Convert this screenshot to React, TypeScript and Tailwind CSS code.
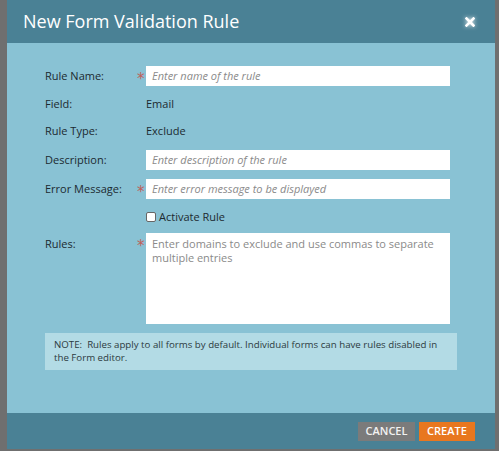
import React from "react";

const Star = () => (
  <span className="w-[9px] text-[#c0605a] text-[15px] leading-none pt-[6px] self-start" style={{ fontFamily: "'DejaVu Sans', sans-serif" }}>
    *
  </span>
);

export default function App() {
  return (
    <div
      className="w-[499px] h-[451px] bg-[#6f6f6f] pl-[7px] pr-[4px] pb-[2px] overflow-hidden"
      style={{ fontFamily: "'Open Sans', 'Noto Sans', sans-serif" }}
    >
      <div className="flex flex-col h-[449px] w-[488px]">
        <div className="h-[43px] bg-[#4a8195] flex items-center justify-between pl-[16px] pr-[20px] shrink-0">
          <span className="text-white text-[18px] leading-none pb-[1px]">New Form Validation Rule</span>
          <svg width="10" height="10" viewBox="0 0 10 10" style={{ filter: "drop-shadow(0 0 2px rgba(255,255,255,0.9))" }}>
            <path d="M1.5 1.5 L8.5 8.5 M8.5 1.5 L1.5 8.5" stroke="#fff" strokeWidth="2.6" strokeLinecap="square" />
          </svg>
        </div>
        <div className="flex-1 bg-[#89c2d4] pl-[38px] pr-[38px] pt-[23px] text-[11px] text-[#1c2a30]">
          <div className="flex items-center h-[20px]">
            <span className="w-[92px]">Rule Name:</span>
            <Star />
            <div className="w-[304px] h-[20px] bg-white flex items-center pl-[6px] italic text-[#8a8a8a]">Enter name of the rule</div>
          </div>
          <div className="flex items-center h-[20px] mt-[8px]">
            <span className="w-[101px]">Field:</span>
            <span>Email</span>
          </div>
          <div className="flex items-center h-[20px] mt-[7px]">
            <span className="w-[101px]">Rule Type:</span>
            <span>Exclude</span>
          </div>
          <div className="flex items-center h-[20px] mt-[9px]">
            <span className="w-[101px]">Description:</span>
            <div className="w-[304px] h-[20px] bg-white flex items-center pl-[6px] italic text-[#8a8a8a]">Enter description of the rule</div>
          </div>
          <div className="flex items-center h-[20px] mt-[9px]">
            <span className="w-[92px]">Error Message:</span>
            <Star />
            <div className="w-[304px] h-[20px] bg-white flex items-center pl-[6px] italic text-[#8a8a8a]">Enter error message to be displayed</div>
          </div>
          <div className="flex items-center h-[16px] mt-[10px] pl-[101px]">
            <span className="w-[10px] h-[10px] bg-white border border-[#666] rounded-[2px] mr-[3px]" />
            <span>Activate Rule</span>
          </div>
          <div className="flex h-[91px] mt-[8px]">
            <span className="w-[92px] pt-[3px]">Rules:</span>
            <Star />
            <div className="w-[304px] h-[91px] bg-white pl-[6px] pr-[6px] pt-[4px] leading-[14px] text-[#8a8a8a]">
              Enter domains to exclude and use commas to separate multiple entries
            </div>
          </div>
          <div className="mt-[9px] w-[412px] h-[37px] bg-[#b3dbe5] pl-[9px] pr-[8px] pt-[5px] text-[9.7px] leading-[13px] text-[#2c3a40]">
            NOTE:&nbsp; Rules apply to all forms by default. Individual forms can have rules disabled in the Form editor.
          </div>
        </div>
        <div className="h-[36px] bg-[#4a8195] flex items-center justify-end pr-[20px] gap-[4px] shrink-0">
          <div className="h-[19px] w-[57px] bg-[#7b7b7b] text-[#f2f2f2] text-[11px] font-semibold flex items-center justify-center">CANCEL</div>
          <div className="h-[19px] w-[56px] bg-[#e8771f] text-white text-[11px] font-semibold flex items-center justify-center">CREATE</div>
        </div>
      </div>
    </div>
  );
}
